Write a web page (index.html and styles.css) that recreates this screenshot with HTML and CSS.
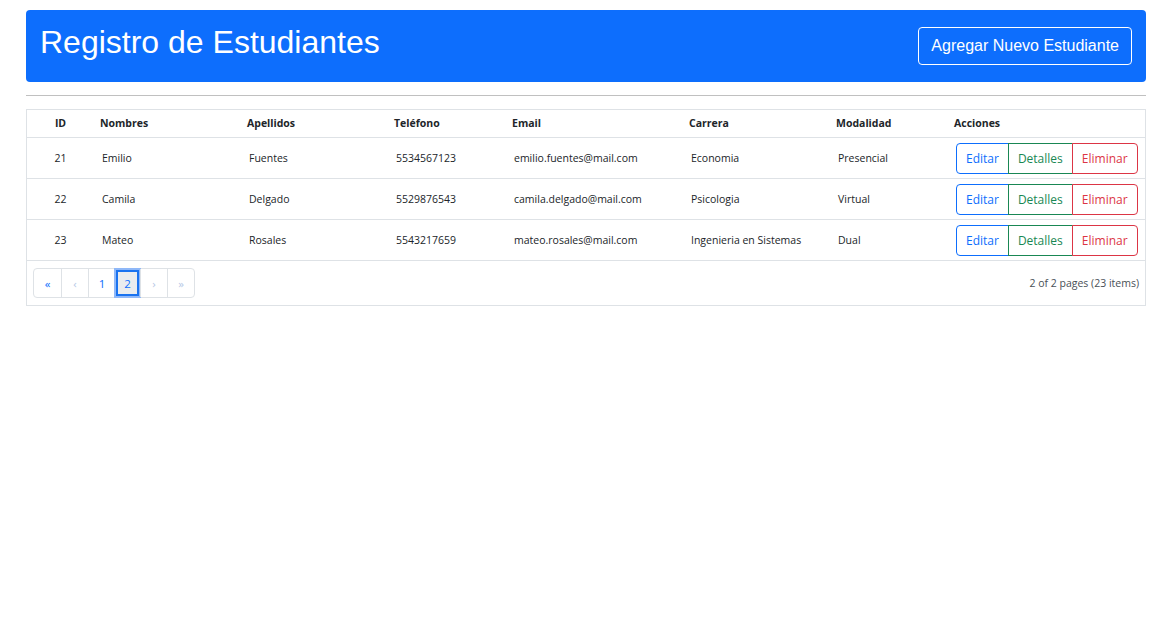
FILE: index.html
```html
<!DOCTYPE html>
<html lang="es">
<head>
<meta charset="utf-8">
<title>Registro de Estudiantes</title>
<link rel="stylesheet" href="styles.css">
</head>
<body>
<div class="page">
  <header class="banner">
    <h1 class="title">Registro de Estudiantes</h1>
    <button class="btn-new">Agregar Nuevo Estudiante</button>
  </header>
  <hr class="sep">
  <div class="grid">
    <table class="tbl">
      <colgroup>
        <col class="c-id"><col class="c-nom"><col class="c-ape"><col class="c-tel"><col class="c-mail"><col class="c-car"><col class="c-mod"><col>
      </colgroup>
      <thead>
        <tr>
          <th class="center">ID</th>
          <th>Nombres</th>
          <th>Apellidos</th>
          <th>Teléfono</th>
          <th>Email</th>
          <th>Carrera</th>
          <th>Modalidad</th>
          <th>Acciones</th>
        </tr>
      </thead>
      <tbody>
        <tr>
          <td class="center">21</td>
          <td>Emilio</td>
          <td>Fuentes</td>
          <td>5534567123</td>
          <td>emilio.fuentes@mail.com</td>
          <td>Economia</td>
          <td>Presencial</td>
          <td><div class="actions"><button class="act edit">Editar</button><button class="act det">Detalles</button><button class="act del">Eliminar</button></div></td>
        </tr>
        <tr>
          <td class="center">22</td>
          <td>Camila</td>
          <td>Delgado</td>
          <td>5529876543</td>
          <td>camila.delgado@mail.com</td>
          <td>Psicologia</td>
          <td>Virtual</td>
          <td><div class="actions"><button class="act edit">Editar</button><button class="act det">Detalles</button><button class="act del">Eliminar</button></div></td>
        </tr>
        <tr>
          <td class="center">23</td>
          <td>Mateo</td>
          <td>Rosales</td>
          <td>5543217659</td>
          <td>mateo.rosales@mail.com</td>
          <td>Ingenieria en Sistemas</td>
          <td>Dual</td>
          <td><div class="actions"><button class="act edit">Editar</button><button class="act det">Detalles</button><button class="act del">Eliminar</button></div></td>
        </tr>
      </tbody>
    </table>
    <div class="pager-row">
      <nav class="pager">
        <span class="pg en">«</span>
        <span class="pg dis">‹</span>
        <span class="pg en">1</span>
        <span class="pg active">2</span>
        <span class="pg dis">›</span>
        <span class="pg dis">»</span>
      </nav>
      <span class="summary">2 of 2 pages (23 items)</span>
    </div>
  </div>
</div>
</body>
</html>
```
FILE: styles.css
```css
* { box-sizing: border-box; }
html, body { margin: 0; padding: 0; background: #fff; }
body { font-family: "Open Sans", "Noto Sans", sans-serif; color: #212529; }

.page { padding: 10px 18px 0 26px; }

.banner {
  background: #0d6efd;
  border-radius: 4px;
  min-height: 72px;
  padding: 14px 14px;
  display: flex;
  justify-content: space-between;
  align-items: flex-start;
}
.title {
  margin: 0;
  font-family: "Liberation Sans", Arial, sans-serif;
  font-weight: 400;
  font-size: 32px;
  line-height: 37px;
  color: #fff;
}
.btn-new {
  align-self: center;
  font-family: "Liberation Sans", Arial, sans-serif;
  font-size: 16px;
  line-height: 24px;
  padding: 6px 12px;
  color: #fff;
  background: transparent;
  border: 1px solid #fff;
  border-radius: 4px;
}

.sep {
  margin: 13px 0 13px;
  border: 0;
  border-top: 1px solid #c0c0c0;
  height: 0;
}

.grid { border: 1px solid #dee2e6; }
.tbl {
  width: 100%;
  border-collapse: collapse;
  table-layout: fixed;
  font-size: 10.5px;
}
.c-id { width: 65px; }
.c-nom, .c-ape, .c-car { width: 147px; }
.c-tel, .c-mod { width: 118px; }
.c-mail { width: 177px; }

.tbl th {
  text-align: left;
  font-weight: 700;
  padding: 7px 8px;
  line-height: 13px;
  border-bottom: 1px solid #dee2e6;
}
.tbl td {
  padding: 4px 10px;
  line-height: 15px;
  height: 41px;
  border-bottom: 1px solid #dee2e6;
  vertical-align: middle;
  white-space: nowrap;
}
.tbl .center { text-align: center; padding-left: 2px; padding-right: 0; }

.actions { display: flex; }
.act {
  font-family: "Open Sans", "Noto Sans", sans-serif;
  font-size: 12px;
  line-height: 19px;
  height: 31px;
  padding: 5px 9px;
  background: #fff;
  border: 1px solid;
  cursor: pointer;
}
.edit { color: #0d6efd; border-color: #0d6efd; border-radius: 4px 0 0 4px; }
.det { color: #198754; border-color: #198754; margin-left: -1px; }
.del { color: #dc3545; border-color: #dc3545; margin-left: -1px; border-radius: 0 4px 4px 0; }

.pager-row {
  display: flex;
  justify-content: space-between;
  align-items: center;
  padding: 6px;
  height: 44px;
}
.pager {
  display: flex;
  border: 1px solid #dee2e6;
  border-radius: 4px;
  height: 30px;
}
.pg {
  width: 27px;
  display: flex;
  align-items: center;
  justify-content: center;
  font-size: 11.5px;
  border-left: 1px solid #dee2e6;
}
.pg:first-child { border-left: 0; width: 27px; }
.en { color: #0d6efd; }
.dis { color: #b6c8e6; }
.active {
  color: #0d6efd;
  background: #e9ecef;
  border: 2px solid #1a73f0;
  box-shadow: 0 0 0 2px #8fb8f8;
  margin: 1px 1px;
  width: 23px;
  height: 26px;
  align-self: center;
}
.summary { font-size: 10.5px; color: #495057; }
```
